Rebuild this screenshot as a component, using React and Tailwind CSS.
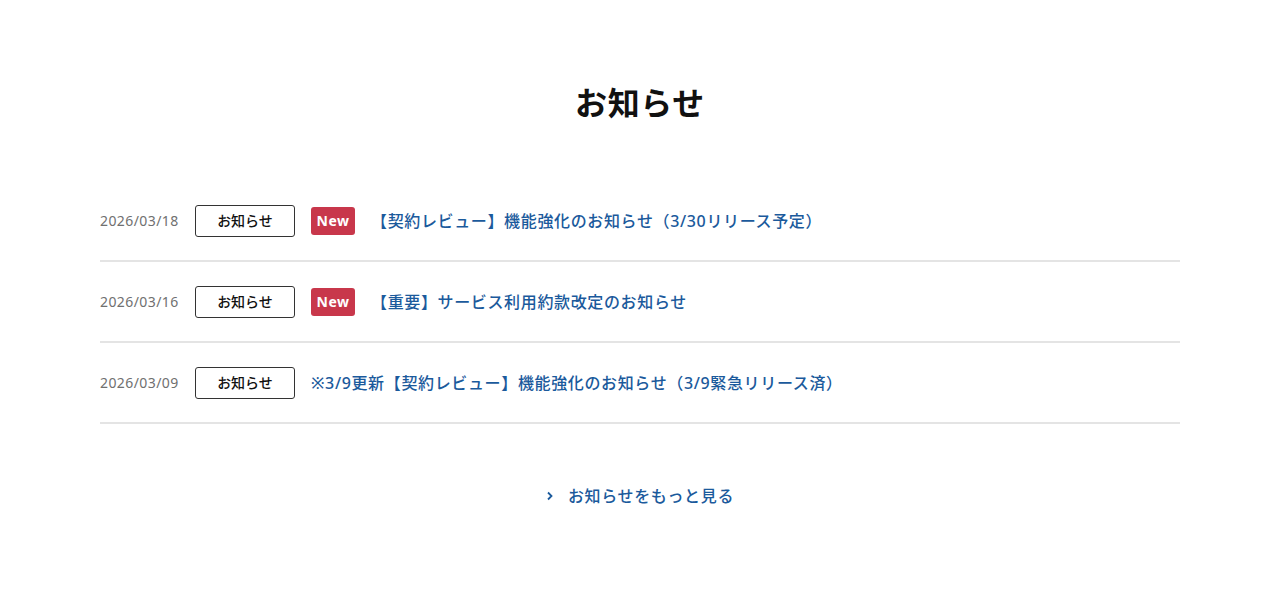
const news = [
  { date: "2026/03/18", isNew: true, title: "【契約レビュー】機能強化のお知らせ（3/30リリース予定）" },
  { date: "2026/03/16", isNew: true, title: "【重要】サービス利用約款改定のお知らせ" },
  { date: "2026/03/09", isNew: false, title: "※3/9更新【契約レビュー】機能強化のお知らせ（3/9緊急リリース済）" },
];

const App = () => {
  return (
    <section className="min-h-[589px] bg-white font-['Noto_Sans','Noto_Sans_CJK_JP',sans-serif] text-[#222]">
      <div className="mx-auto w-[1080px] pt-[80px]">
        <h2 className="text-center text-[32px] font-bold leading-[46px] tracking-[0.02em] text-[#111]">お知らせ</h2>

        <ul className="mt-[55px]">
          {news.map((item) => (
            <li key={item.date} className="flex h-[81px] items-center border-b-2 border-[#e4e4e4]">
              <span className="w-[95px] text-[14px] tracking-[0.03em] text-[#707070]">{item.date}</span>
              <span className="flex h-[32px] w-[100px] items-center justify-center rounded-[3px] border border-[#333] text-[14px] font-medium text-[#111]">
                お知らせ
              </span>
              {item.isNew && (
                <span className="ml-4 flex h-[28px] w-[44px] items-center justify-center rounded-[3px] bg-[#c8374b] text-[14px] font-bold tracking-[0.04em] text-white">
                  New
                </span>
              )}
              <a href="#" className="ml-4 text-[16px] font-medium tracking-[0.04em] text-[#1b5a9c]">
                {item.title}
              </a>
            </li>
          ))}
        </ul>

        <div className="mt-[60px] flex justify-center">
          <a href="#" className="flex items-center gap-[14px] text-[16px] font-medium tracking-[0.04em] text-[#1b5a9c]">
            <svg width="8" height="10" viewBox="0 0 8 10" fill="none">
              <path d="M2 1.5 L5.5 5 L2 8.5" stroke="#1b5a9c" strokeWidth="1.8" />
            </svg>
            お知らせをもっと見る
          </a>
        </div>
      </div>
    </section>
  );
};

export default App;
